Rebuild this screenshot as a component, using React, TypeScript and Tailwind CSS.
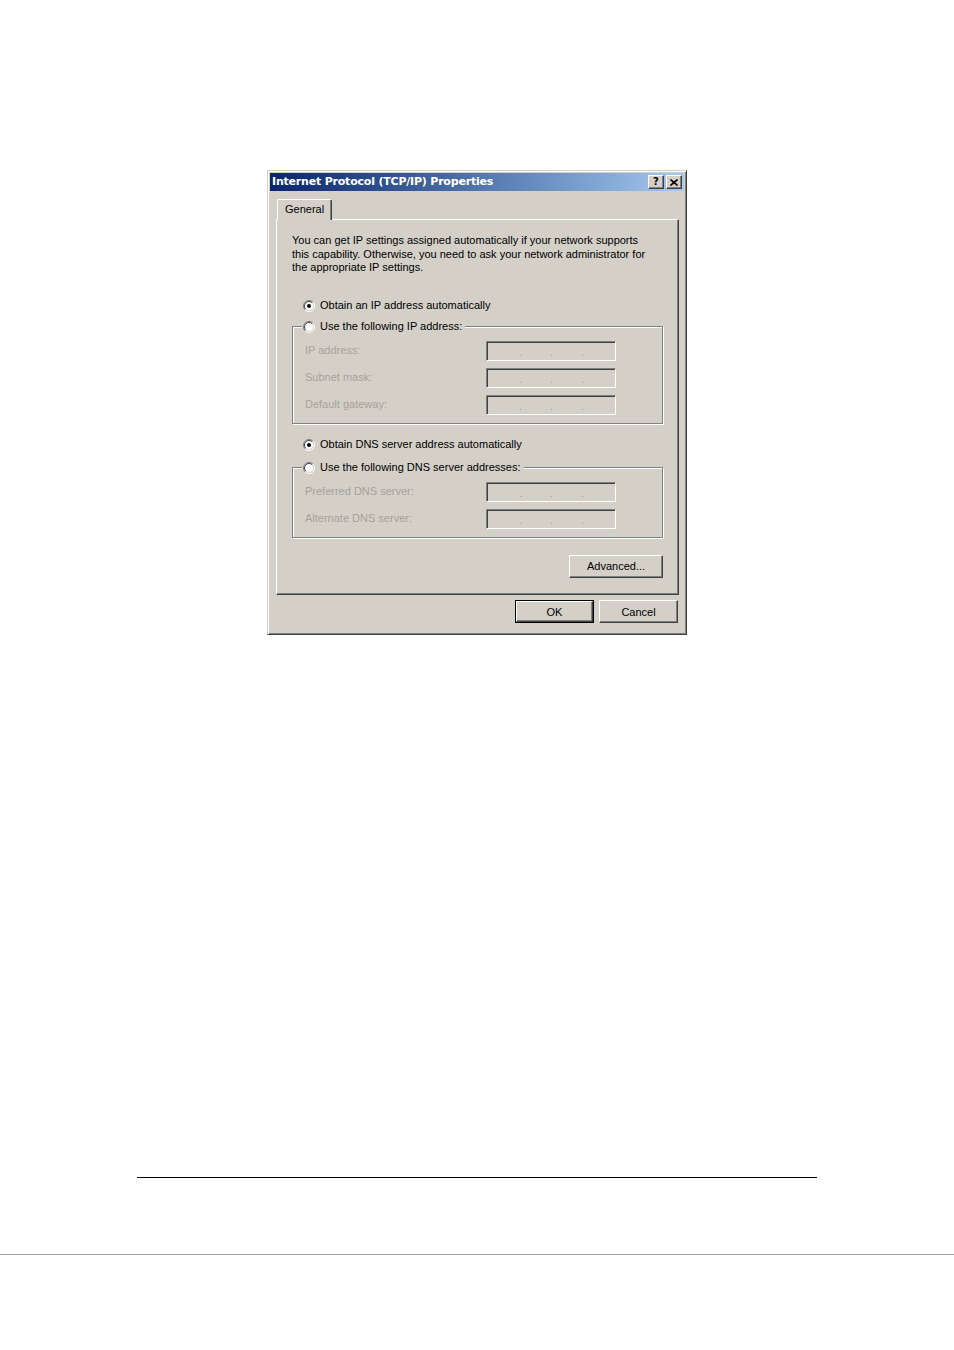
import React from "react";

const raised =
  "border border-t-white border-l-white border-r-[#404040] border-b-[#404040] shadow-[inset_-1px_-1px_0_#808080] bg-[#d4d0c8]";

const Radio = ({ checked }: { checked?: boolean }) => (
  <svg width="12" height="12" viewBox="0 0 12 12" className="shrink-0">
    <circle cx="6" cy="6" r="5" fill="#fff" />
    <path d="M2.1 9.9A5.5 5.5 0 0 1 9.9 2.1" fill="none" stroke="#808080" strokeWidth="1" />
    <path d="M9.9 2.1A5.5 5.5 0 0 1 2.1 9.9" fill="none" stroke="#fff" strokeWidth="1" />
    <path d="M2.8 9.2A4.5 4.5 0 0 1 9.2 2.8" fill="none" stroke="#404040" strokeWidth="1" />
    <path d="M9.2 2.8A4.5 4.5 0 0 1 2.8 9.2" fill="none" stroke="#d4d0c8" strokeWidth="1" />
    {checked && <circle cx="6" cy="6" r="2" fill="#000" />}
  </svg>
);

const IpBox = () => (
  <div className="w-[130px] h-[20px] border border-t-[#808080] border-l-[#808080] border-r-white border-b-white shadow-[inset_1px_1px_0_#404040,inset_-1px_-1px_0_#d4d0c8] bg-[#d4d0c8] flex items-end pb-[2px] pl-[18px] text-[#a0a0a0] text-[11px] leading-[11px]">
    <span className="w-[31px] text-center">.</span>
    <span className="w-[31px] text-center">.</span>
    <span className="w-[31px] text-center">.</span>
  </div>
);

const FieldRow = ({ label }: { label: string }) => (
  <div className="flex items-center h-[20px]">
    <span className="w-[181px] text-[#a5a29a]">{label}</span>
    <IpBox />
  </div>
);

const Group = ({ legend, rows }: { legend: string; rows: string[] }) => (
  <fieldset className="w-[371px] border border-[#808080] shadow-[inset_1px_1px_0_#fff,1px_1px_0_#fff] px-0 pt-[6px] pb-[8px]">
    <legend className="ml-[9px] pl-[1px] pr-[3px] bg-[#d4d0c8]">
      <span className="flex items-center gap-[5px] h-[16px]">
        <Radio />
        <span>{legend}</span>
      </span>
    </legend>
    <div className="flex flex-col gap-[7px] pl-[12px]">
      {rows.map((r) => (
        <FieldRow key={r} label={r} />
      ))}
    </div>
  </fieldset>
);

export default function App() {
  return (
    <div className="w-[954px] h-[1350px] bg-white flex flex-col font-['Liberation_Sans',Arial,sans-serif] text-[11px] text-black">
      {/* dialog */}
      <div className="ml-[267px] mt-[170px] w-[420px] h-[465px] bg-[#d4d0c8] border border-t-[#d4d0c8] border-l-[#d4d0c8] border-r-[#404040] border-b-[#404040] shadow-[inset_1px_1px_0_#fff,inset_-1px_-1px_0_#808080] p-[2px] flex flex-col">
        {/* title bar */}
        <div className="h-[18px] bg-gradient-to-r from-[#0a246a] to-[#a6caf0] flex items-center pl-[2px] pr-[2px]">
          <span className="font-['DejaVu_Sans',Verdana,sans-serif] font-bold text-[11px] text-white tracking-[-0.2px] flex-1">
            Internet Protocol (TCP/IP) Properties
          </span>
          <div className="flex gap-[2px]">
            <div className={`${raised} w-[16px] h-[14px] flex items-center justify-center font-['DejaVu_Sans',sans-serif] font-bold text-[10px] leading-none`}>
              ?
            </div>
            <div className={`${raised} w-[16px] h-[14px] flex items-center justify-center`}>
              <svg width="8" height="7" viewBox="0 0 8 7">
                <path d="M0.5 0.5L7.5 6.5M7.5 0.5L0.5 6.5" stroke="#000" strokeWidth="1.6" />
              </svg>
            </div>
          </div>
        </div>

        {/* tab */}
        <div className="mt-[8px] ml-[7px] relative z-10 w-[55px] h-[21px] bg-[#d4d0c8] border-t border-l border-r border-t-white border-l-white border-r-[#404040] shadow-[inset_-1px_0_0_#808080] rounded-t-[2px] pl-[7px] pt-[3px] leading-[13px]">
          General
        </div>

        {/* tab panel */}
        <div className="-mt-px ml-[6px] w-[403px] h-[376px] border border-t-white border-l-white border-r-[#404040] border-b-[#404040] shadow-[inset_-1px_-1px_0_#808080] pl-[15px] flex flex-col">
          <p className="mt-[14px] leading-[13.5px] whitespace-nowrap">
            You can get IP settings assigned automatically if your network supports
            <br />
            this capability. Otherwise, you need to ask your network administrator for
            <br />
            the appropriate IP settings.
          </p>

          <div className="mt-[23px] ml-[11px] h-[16px] flex items-center gap-[5px]">
            <Radio checked />
            <span>Obtain an IP address automatically</span>
          </div>

          <div className="mt-[5px]">
            <Group legend="Use the following IP address:" rows={["IP address:", "Subnet mask:", "Default gateway:"]} />
          </div>

          <div className="mt-[13px] ml-[11px] h-[16px] flex items-center gap-[5px]">
            <Radio checked />
            <span>Obtain DNS server address automatically</span>
          </div>

          <div className="mt-[7px]">
            <Group legend="Use the following DNS server addresses:" rows={["Preferred DNS server:", "Alternate DNS server:"]} />
          </div>

          <div className="mt-[17px] w-[371px] flex justify-end">
            <div className={`${raised} w-[94px] h-[23px] flex items-center justify-center pt-px`}>Advanced...</div>
          </div>
        </div>

        {/* buttons */}
        <div className="mt-[5px] flex justify-end gap-[5px] pr-[6px]">
          <div className="w-[79px] h-[23px] border border-black">
            <div className={`${raised} w-full h-full flex items-center justify-center pt-px`}>OK</div>
          </div>
          <div className={`${raised} w-[79px] h-[23px] flex items-center justify-center pt-px`}>Cancel</div>
        </div>
      </div>

      {/* page rules */}
      <div className="mt-[542px] ml-[137px] w-[680px] h-px bg-black" />
      <div className="mt-[76px] w-full h-px bg-[#a0a0a0]" />
    </div>
  );
}
